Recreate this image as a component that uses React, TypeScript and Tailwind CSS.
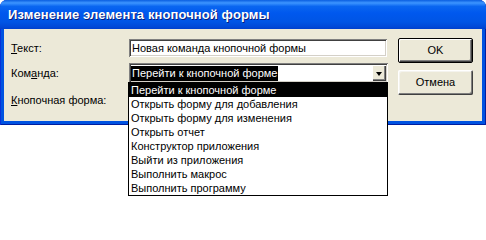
const items = [
  "Перейти к кнопочной форме",
  "Открыть форму для добавления",
  "Открыть форму для изменения",
  "Открыть отчет",
  "Конструктор приложения",
  "Выйти из приложения",
  "Выполнить макрос",
  "Выполнить программу",
];

const sunken =
  "shadow-[inset_1px_1px_#808080,inset_-1px_-1px_#ffffff,inset_2px_2px_#404040,inset_-2px_-2px_#d4d0c8]";

export default function App() {
  return (
    <div
      className="relative w-[486px] h-[204px] bg-white text-[11px] text-black"
      style={{ fontFamily: '"Liberation Sans", Arial, sans-serif' }}
    >
      <div className="flex flex-col w-[486px] h-[125px] rounded-t-[7px] bg-[#0053e1] shadow-[inset_1px_0_#0831d9,inset_-1px_0_#001ea0,inset_0_-1px_#001ea0]">
        <div className="flex items-center h-[29px] pl-[8px] rounded-t-[7px] bg-[linear-gradient(to_bottom,#0a5ee0_0%,#3d95ff_10%,#0a66f0_22%,#0058ee_45%,#0055e5_75%,#0049d8_92%,#0040cc_100%)]">
          <span className="text-white font-bold text-[13px] [text-shadow:1px_1px_#0a1e7a] tracking-[0.1px]">
            Изменение элемента кнопочной формы
          </span>
        </div>
        <div className="flex mx-[4px] h-[92px] bg-[#ece9d8]">
          <div className="flex flex-col pl-[7px] pt-[10px]">
            <div className="flex items-center h-[18px]">
              <span className="w-[118px]">
                <u>Т</u>екст:
              </span>
              <div className={`w-[258px] h-[18px] bg-white flex items-center pl-[3px] ${sunken}`}>
                Новая команда кнопочной формы
              </div>
            </div>
            <div className="flex items-center h-[20px] mt-[6px]">
              <span className="w-[118px]">
                Ком<u>а</u>нда:
              </span>
              <div className={`relative w-[259px] h-[20px] bg-white flex items-center pl-[2px] ${sunken}`}>
                <span className="bg-black text-white leading-[15px] px-[1px]">Перейти к кнопочной форме</span>
                <div className="absolute right-[2px] top-[2px] w-[14px] h-[16px] bg-[#ece9d8] flex items-center justify-center shadow-[inset_1px_1px_#ffffff,inset_-1px_-1px_#404040,inset_-2px_-2px_#808080]">
                  <div className="w-0 h-0 border-l-[3.5px] border-r-[3.5px] border-t-[4px] border-l-transparent border-r-transparent border-t-black mt-[1px]" />
                </div>
              </div>
            </div>
            <div className="flex items-center h-[18px] mt-[8px]">
              <span className="w-[118px]">
                <u>К</u>нопочная форма:
              </span>
            </div>
          </div>
          <div className="flex flex-col gap-[7px] pl-[10px] pt-[9px]">
            <button className="w-[75px] h-[25px] rounded-[2px] bg-[#ece9d8] border border-black shadow-[inset_1px_1px_#ffffff,inset_-1px_-1px_#404040,inset_-2px_-2px_#808080] text-[11px]">
              OK
            </button>
            <button className="w-[75px] h-[25px] rounded-[2px] bg-[#ece9d8] shadow-[inset_1px_1px_#ffffff,inset_-1px_-1px_#404040,inset_-2px_-2px_#808080,inset_2px_2px_#f4f3ee] text-[11px]">
              Отмена
            </button>
          </div>
        </div>
      </div>
      <div className="absolute left-[128px] top-[82px] w-[260px] bg-white border border-black">
        {items.map((it, i) => (
          <div
            key={it}
            className={`h-[14px] leading-[14px] pl-[2px] ${i === 0 ? "bg-black text-white" : ""}`}
          >
            {it}
          </div>
        ))}
      </div>
    </div>
  );
}
